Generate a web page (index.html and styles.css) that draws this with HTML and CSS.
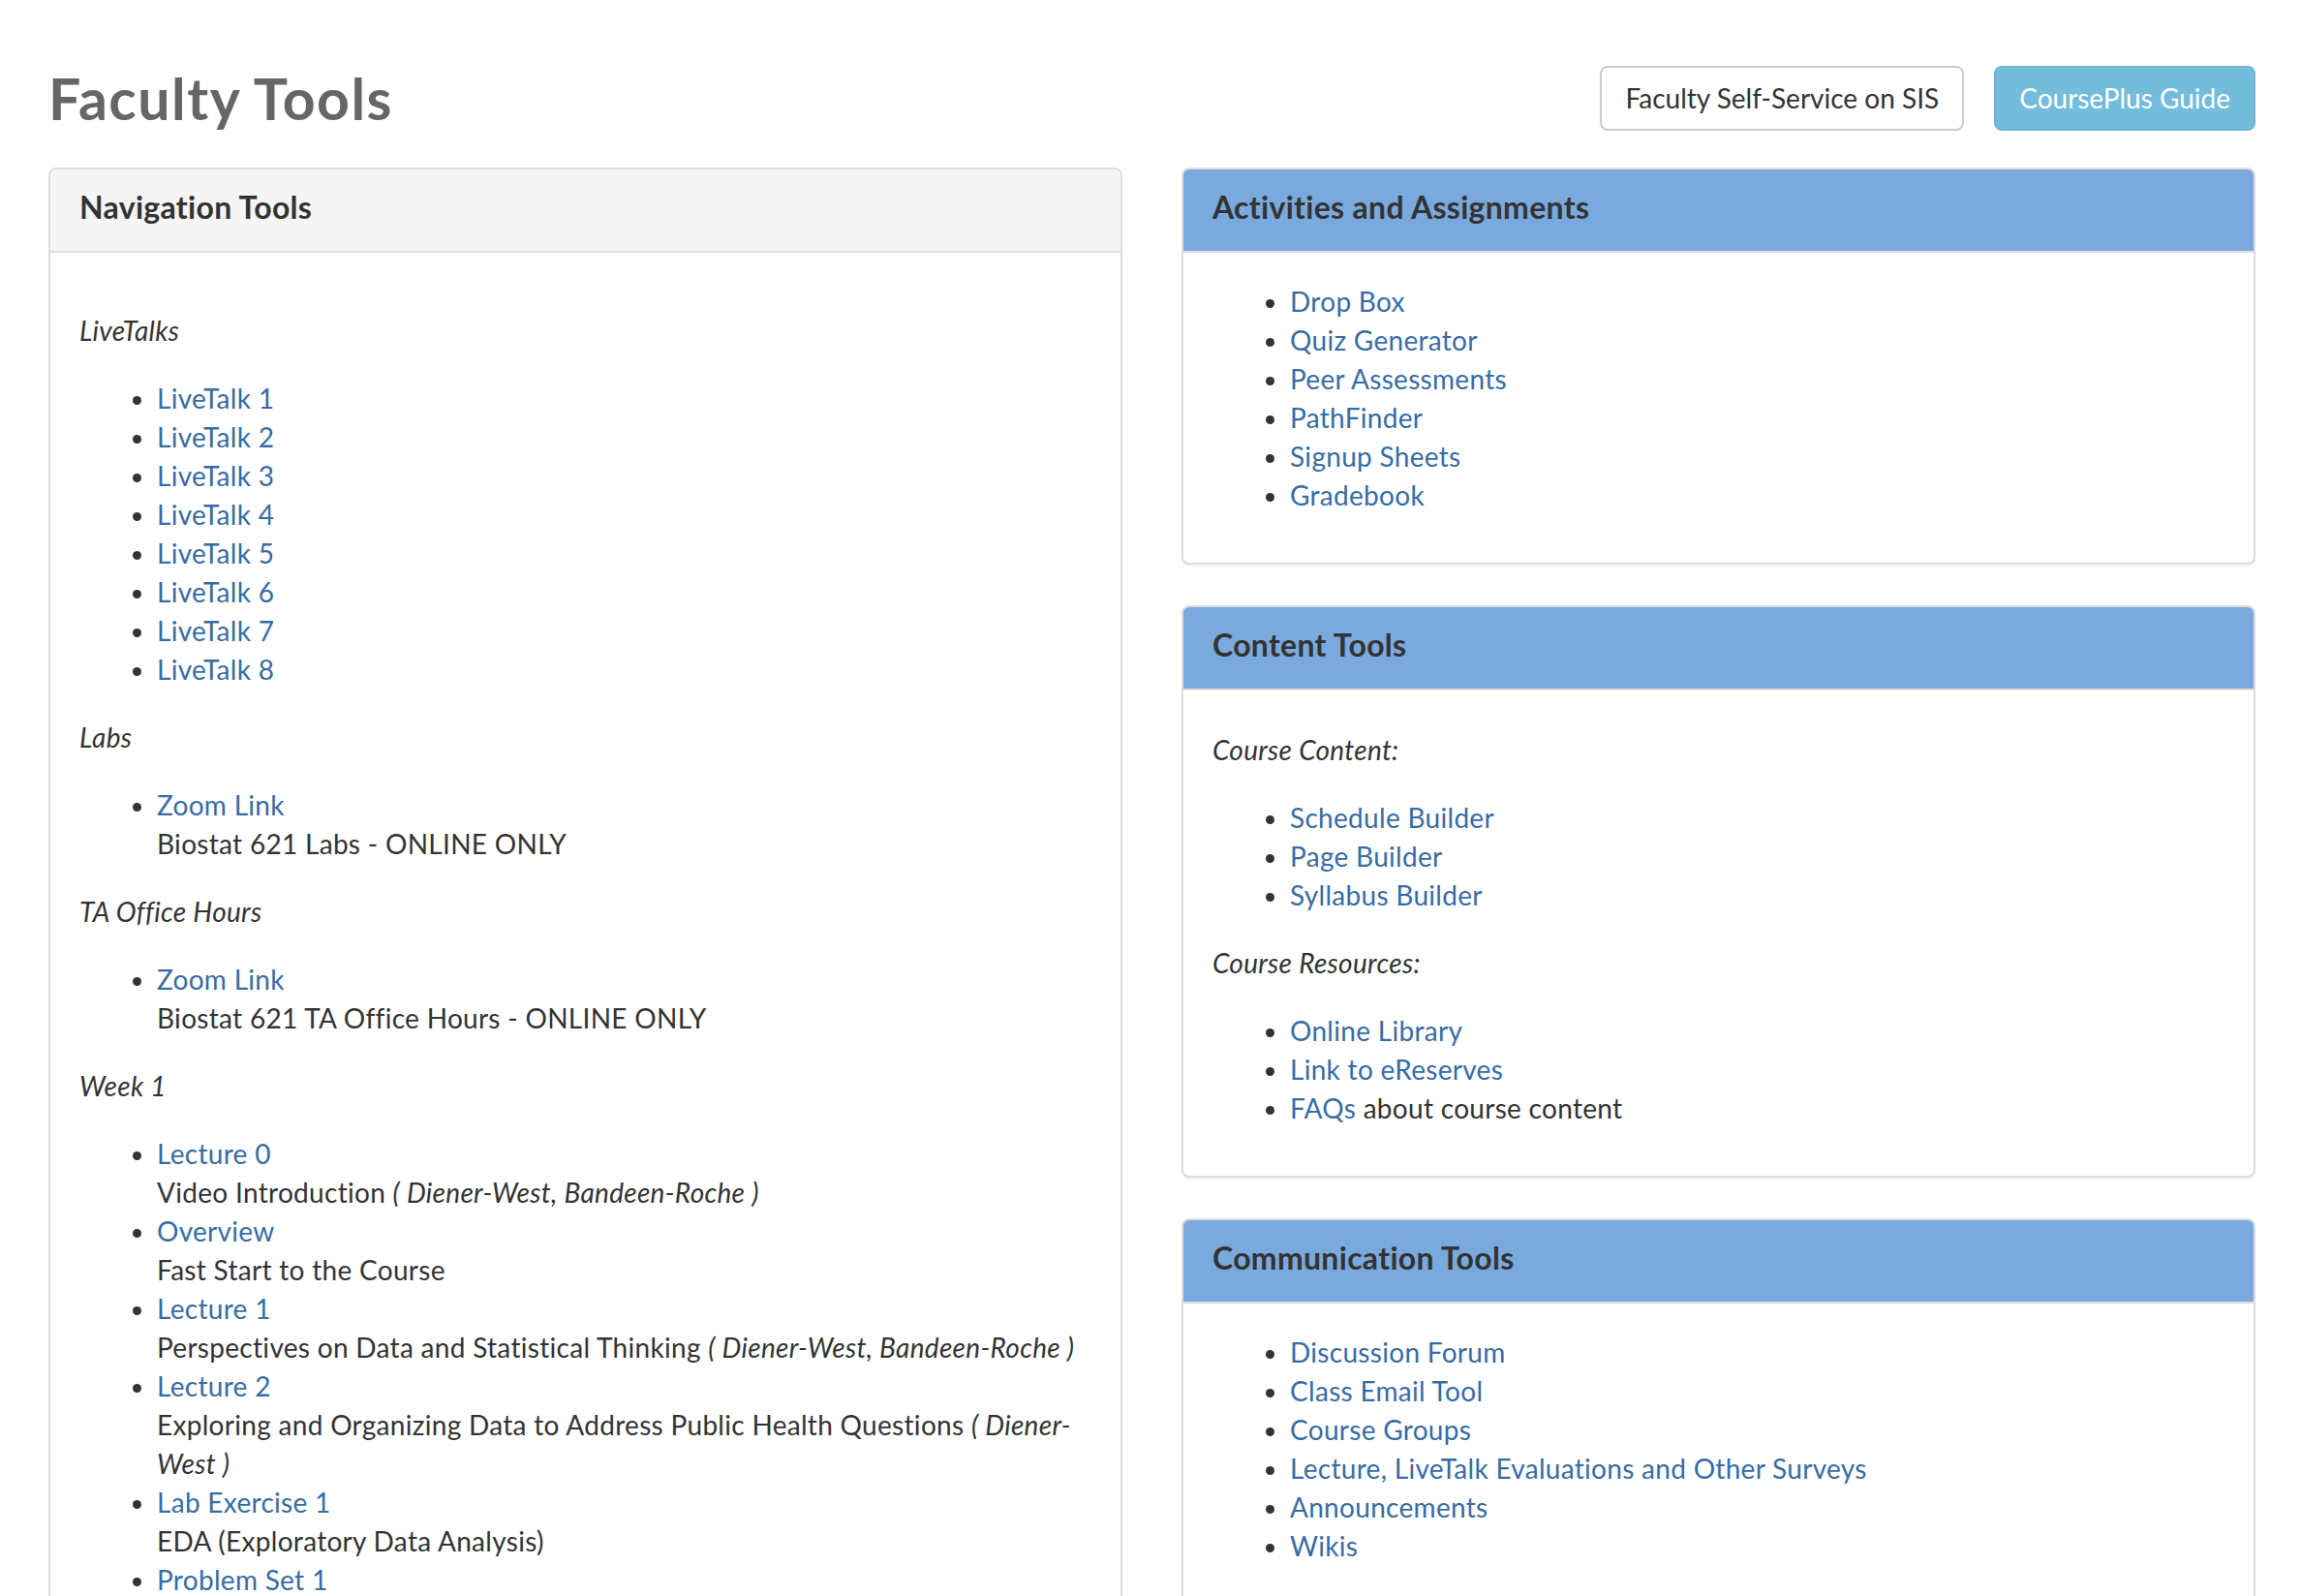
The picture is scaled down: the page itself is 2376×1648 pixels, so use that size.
FILE: index.html
```html
<!DOCTYPE html>
<html lang="en">
<head>
  <meta charset="UTF-8" />
  <title>Faculty Tools</title>
  <link rel="stylesheet" href="styles.css">
</head>
<body>
  <div class="page">
    <div class="page-header">
      <h2>Faculty Tools</h2>
      <div class="header-actions">
        <a class="btn btn-default" href="#">Faculty Self-Service on SIS</a>
        <a class="btn btn-info" href="#">CoursePlus Guide</a>
      </div>
    </div>

    <div class="columns">
      <!-- left column: schedule of course sessions -->
      <div class="panel">
        <div class="panel-heading">
          <h3 class="panel-title">Navigation Tools</h3>
        </div>
        <div class="panel-body nav-body">
          <p class="group-label"><em>LiveTalks</em></p>
          <ul>
            <li><a href="#">LiveTalk 1</a></li>
            <li><a href="#">LiveTalk 2</a></li>
            <li><a href="#">LiveTalk 3</a></li>
            <li><a href="#">LiveTalk 4</a></li>
            <li><a href="#">LiveTalk 5</a></li>
            <li><a href="#">LiveTalk 6</a></li>
            <li><a href="#">LiveTalk 7</a></li>
            <li><a href="#">LiveTalk 8</a></li>
          </ul>

          <p class="group-label"><em>Labs</em></p>
          <ul>
            <li><a href="#">Zoom Link</a><br>Biostat 621 Labs - ONLINE ONLY</li>
          </ul>

          <p class="group-label"><em>TA Office Hours</em></p>
          <ul>
            <li><a href="#">Zoom Link</a><br>Biostat 621 TA Office Hours - ONLINE ONLY</li>
          </ul>

          <p class="group-label"><em>Week 1</em></p>
          <ul>
            <li><a href="#">Lecture 0</a><br>Video Introduction <em>( Diener-West, Bandeen-Roche )</em></li>
            <li><a href="#">Overview</a><br>Fast Start to the Course</li>
            <li><a href="#">Lecture 1</a><br>Perspectives on Data and Statistical Thinking <em>( Diener-West, Bandeen-Roche )</em></li>
            <li><a href="#">Lecture 2</a><br>Exploring and Organizing Data to Address Public Health Questions <em>( Diener-West )</em></li>
            <li><a href="#">Lab Exercise 1</a><br>EDA (Exploratory Data Analysis)</li>
            <li><a href="#">Problem Set 1</a><br>Summarizing and Displaying Data</li>
          </ul>
        </div>
      </div>

      <!-- right column: tool panels -->
      <div class="side">
        <div class="panel panel-primary">
          <div class="panel-heading">
            <h3 class="panel-title">Activities and Assignments</h3>
          </div>
          <div class="panel-body">
            <ul>
              <li><a href="#">Drop Box</a></li>
              <li><a href="#">Quiz Generator</a></li>
              <li><a href="#">Peer Assessments</a></li>
              <li><a href="#">PathFinder</a></li>
              <li><a href="#">Signup Sheets</a></li>
              <li><a href="#">Gradebook</a></li>
            </ul>
          </div>
        </div>

        <div class="panel panel-primary">
          <div class="panel-heading">
            <h3 class="panel-title">Content Tools</h3>
          </div>
          <div class="panel-body">
            <p class="tool-label"><em>Course Content:</em></p>
            <ul>
              <li><a href="#">Schedule Builder</a></li>
              <li><a href="#">Page Builder</a></li>
              <li><a href="#">Syllabus Builder</a></li>
            </ul>
            <p class="tool-label"><em>Course Resources:</em></p>
            <ul>
              <li><a href="#">Online Library</a></li>
              <li><a href="#">Link to eReserves</a></li>
              <li><a href="#">FAQs</a> about course content</li>
            </ul>
          </div>
        </div>

        <div class="panel panel-primary">
          <div class="panel-heading">
            <h3 class="panel-title">Communication Tools</h3>
          </div>
          <div class="panel-body">
            <ul>
              <li><a href="#">Discussion Forum</a></li>
              <li><a href="#">Class Email Tool</a></li>
              <li><a href="#">Course Groups</a></li>
              <li><a href="#">Lecture, LiveTalk Evaluations and Other Surveys</a></li>
              <li><a href="#">Announcements</a></li>
              <li><a href="#">Wikis</a></li>
            </ul>
          </div>
        </div>
      </div>
    </div>
  </div>
</body>
</html>
```

FILE: styles.css
```css
* {
  box-sizing: border-box;
}

body {
  margin: 0;
  font-family: 'Lato', 'Open Sans', sans-serif;
  font-size: 28px;
  line-height: 40px;
  letter-spacing: 0.3px;
  color: #333;
  background: #fff;
}

a {
  color: #376ca4;
  text-decoration: none;
}

.page {
  padding: 68px 47px 0 50px;
}

/* title row */
.page-header {
  display: flex;
  justify-content: space-between;
  align-items: center;
  margin-bottom: 38px;
}

.page-header h2 {
  margin: 0;
  font-size: 59px;
  line-height: 67px;
  font-weight: 700;
  letter-spacing: 1.5px;
  color: #666;
}

.header-actions {
  display: flex;
  gap: 31px;
}

.btn {
  display: inline-block;
  padding: 12px 24px;
  font-size: 28px;
  line-height: 39px;
  letter-spacing: 0;
  border: 2px solid transparent;
  border-radius: 8px;
}

.btn-default {
  color: #333;
  background: #fff;
  border-color: #ccc;
}

.btn-info {
  color: #fff;
  background: #74bcdb;
  border-color: #6cb5d6;
}

/* two column grid */
.columns {
  display: grid;
  grid-template-columns: 1fr 1fr;
  column-gap: 61px;
  align-items: start;
}

.panel {
  background: #fff;
  border: 2px solid #ddd;
  border-radius: 8px;
  box-shadow: 0 2px 2px rgba(0, 0, 0, 0.05);
  margin-bottom: 42px;
}

.panel-heading {
  padding: 17px 30px 23px;
  background: #f5f5f5;
  border-bottom: 2px solid #ddd;
  border-radius: 6px 6px 0 0;
}

.panel-primary .panel-heading {
  background: #7aaadd;
}

.panel-title {
  margin: 0;
  font-size: 32px;
  line-height: 44px;
  font-weight: 700;
  letter-spacing: 0.3px;
  color: #333;
}

.panel-body {
  padding: 30px;
}

.panel-body ul {
  margin: 0 0 20px;
  padding-left: 80px;
}

.nav-body .group-label {
  margin: 30px 0;
}

.nav-body ul {
  margin: 30px 0;
}

.tool-label {
  margin: 11px 0 30px;
}

.tool-label + ul {
  margin-bottom: 30px;
}

.panel-body ul:last-child {
  margin-bottom: 20px;
}
```
